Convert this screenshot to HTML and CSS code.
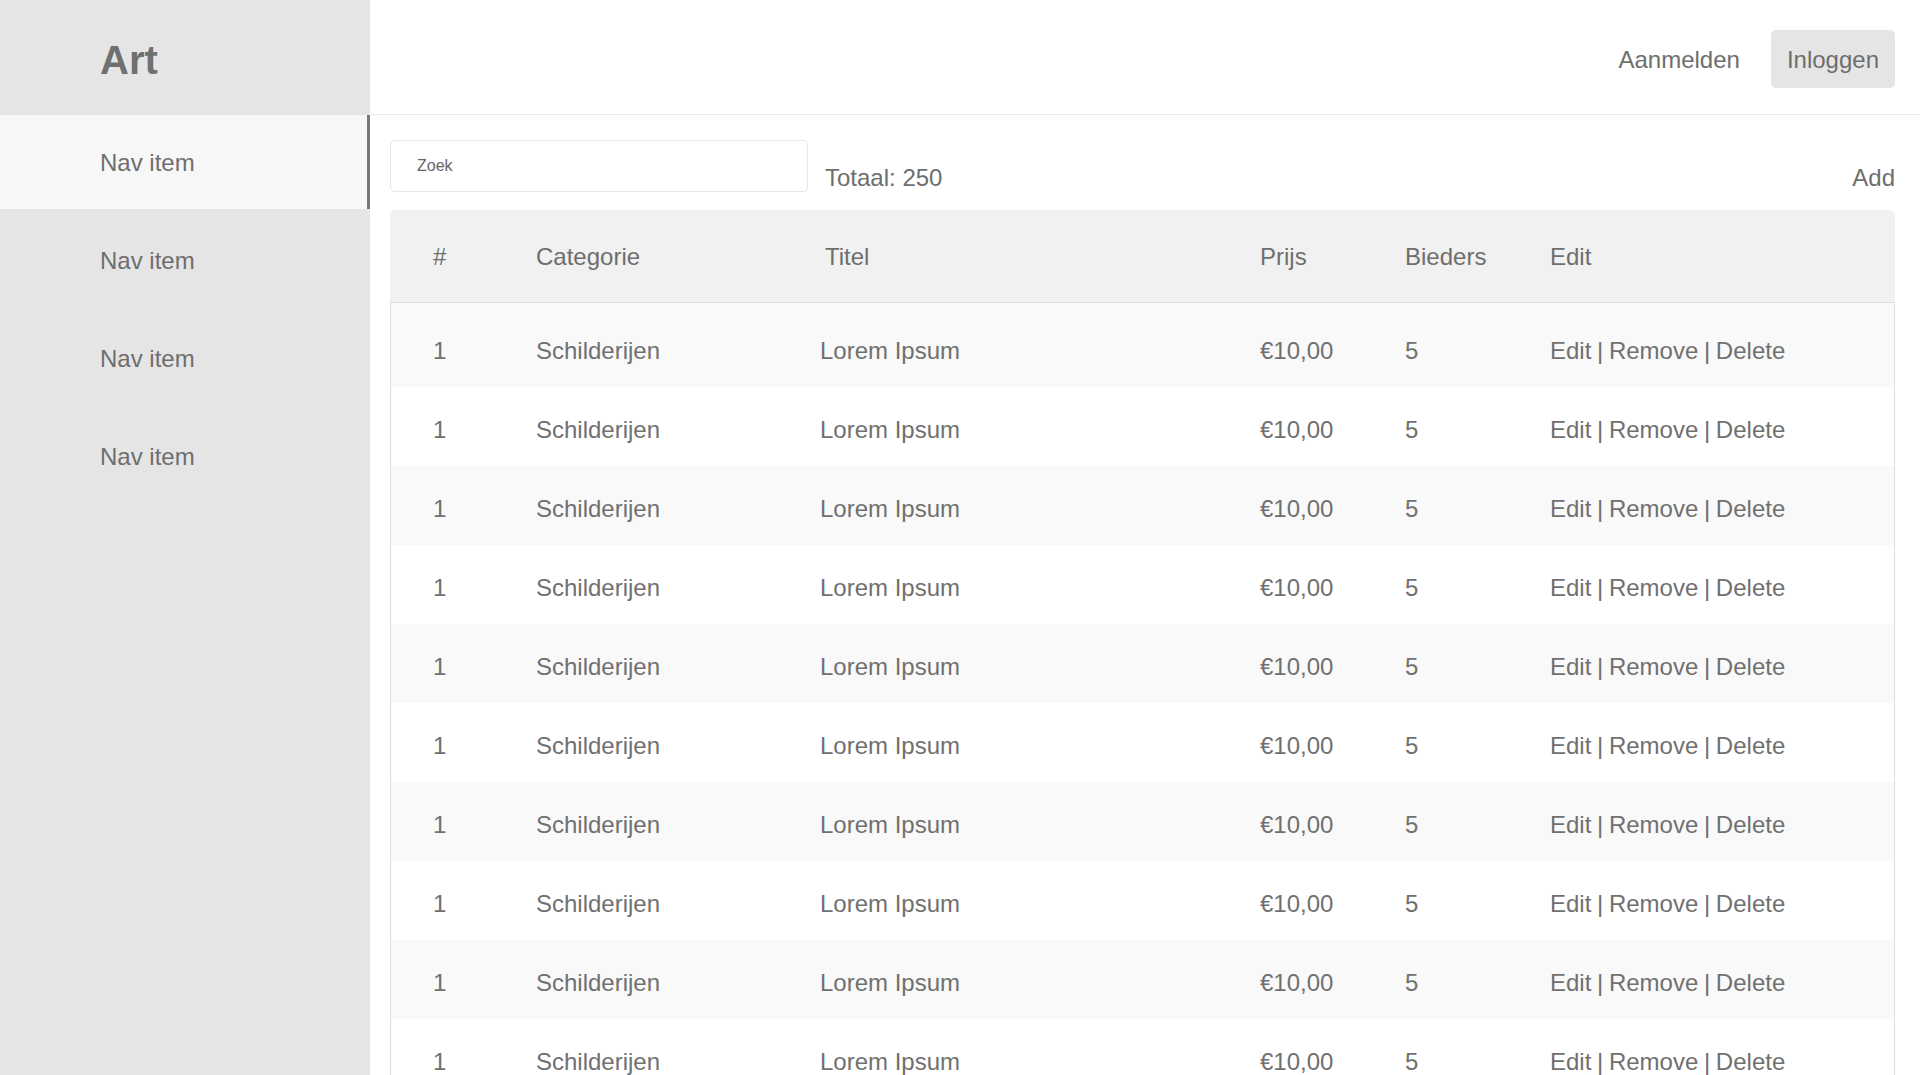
FILE: index.html
```html
<!DOCTYPE html>
<html lang="nl">
<head>
<meta charset="utf-8">
<title>Art</title>
<link rel="stylesheet" href="styles.css">
</head>
<body>
<div class="app">
  <aside class="sidebar">
    <div class="logo">Art</div>
    <nav class="nav">
      <a class="nav-item active">Nav item</a>
      <a class="nav-item">Nav item</a>
      <a class="nav-item">Nav item</a>
      <a class="nav-item">Nav item</a>
    </nav>
  </aside>
  <main class="main">
    <header class="topbar">
      <a class="topbar-link">Aanmelden</a>
      <button class="btn-login">Inloggen</button>
    </header>
    <section class="content">
      <div class="toolbar">
        <input class="search" type="text" placeholder="Zoek">
        <span class="total">Totaal: 250</span>
        <a class="add">Add</a>
      </div>
      <div class="table">
        <div class="thead grid">
          <span>#</span><span>Categorie</span><span>Titel</span><span>Prijs</span><span>Bieders</span><span>Edit</span>
        </div>
        <div class="tbody">
          <div class="tr grid"><span>1</span><span>Schilderijen</span><span class="c-title">Lorem Ipsum</span><span>€10,00</span><span>5</span><span class="c-actions">Edit | Remove | Delete</span></div>
          <div class="tr grid"><span>1</span><span>Schilderijen</span><span class="c-title">Lorem Ipsum</span><span>€10,00</span><span>5</span><span class="c-actions">Edit | Remove | Delete</span></div>
          <div class="tr grid"><span>1</span><span>Schilderijen</span><span class="c-title">Lorem Ipsum</span><span>€10,00</span><span>5</span><span class="c-actions">Edit | Remove | Delete</span></div>
          <div class="tr grid"><span>1</span><span>Schilderijen</span><span class="c-title">Lorem Ipsum</span><span>€10,00</span><span>5</span><span class="c-actions">Edit | Remove | Delete</span></div>
          <div class="tr grid"><span>1</span><span>Schilderijen</span><span class="c-title">Lorem Ipsum</span><span>€10,00</span><span>5</span><span class="c-actions">Edit | Remove | Delete</span></div>
          <div class="tr grid"><span>1</span><span>Schilderijen</span><span class="c-title">Lorem Ipsum</span><span>€10,00</span><span>5</span><span class="c-actions">Edit | Remove | Delete</span></div>
          <div class="tr grid"><span>1</span><span>Schilderijen</span><span class="c-title">Lorem Ipsum</span><span>€10,00</span><span>5</span><span class="c-actions">Edit | Remove | Delete</span></div>
          <div class="tr grid"><span>1</span><span>Schilderijen</span><span class="c-title">Lorem Ipsum</span><span>€10,00</span><span>5</span><span class="c-actions">Edit | Remove | Delete</span></div>
          <div class="tr grid"><span>1</span><span>Schilderijen</span><span class="c-title">Lorem Ipsum</span><span>€10,00</span><span>5</span><span class="c-actions">Edit | Remove | Delete</span></div>
          <div class="tr grid"><span>1</span><span>Schilderijen</span><span class="c-title">Lorem Ipsum</span><span>€10,00</span><span>5</span><span class="c-actions">Edit | Remove | Delete</span></div>
          <div class="tr grid"><span>1</span><span>Schilderijen</span><span class="c-title">Lorem Ipsum</span><span>€10,00</span><span>5</span><span class="c-actions">Edit | Remove | Delete</span></div>
        </div>
      </div>
    </section>
  </main>
</div>
</body>
</html>
```
FILE: styles.css
```css
html, body {
  margin: 0;
  height: 100%;
  overflow: hidden;
}

body {
  font-family: "Liberation Sans", Arial, Helvetica, sans-serif;
  color: #6e6e6e;
  background: #ffffff;
}

.app {
  display: flex;
  height: 100vh;
}

/* Sidebar */
.sidebar {
  width: 370px;
  flex: none;
  background: #e5e5e5;
}

.logo {
  height: 115px;
  box-sizing: border-box;
  padding: 6px 0 0 100px;
  display: flex;
  align-items: center;
  font-size: 40px;
  font-weight: bold;
  color: #707070;
}

.nav {
  display: flex;
  flex-direction: column;
  gap: 4px;
}

.nav-item {
  height: 94px;
  box-sizing: border-box;
  padding: 1px 0 0 100px;
  display: flex;
  align-items: center;
  font-size: 24px;
  color: #6e6e6e;
  cursor: pointer;
}

.nav-item.active {
  background: #f7f7f7;
  border-right: 3px solid #777777;
}

/* Main */
.main {
  flex: 1;
  min-width: 0;
  display: flex;
  flex-direction: column;
}

.topbar {
  height: 115px;
  box-sizing: border-box;
  flex: none;
  border-bottom: 1px solid #ebebeb;
  display: flex;
  align-items: center;
  justify-content: flex-end;
  gap: 31px;
  padding: 3px 25px 0 0;
}

.topbar-link {
  font-size: 24px;
  color: #6e6e6e;
  padding-top: 2px;
  cursor: pointer;
}

.btn-login {
  height: 58px;
  padding: 2px 16px 0;
  border: none;
  border-radius: 5px;
  background: #e5e5e5;
  font-family: inherit;
  font-size: 24px;
  color: #6e6e6e;
  cursor: pointer;
}

.content {
  padding: 25px 25px 0 20px;
}

.toolbar {
  display: flex;
  align-items: flex-end;
}

.search {
  width: 418px;
  height: 52px;
  box-sizing: border-box;
  border: 1px solid #e6e6e6;
  border-radius: 5px;
  padding: 0 0 0 26px;
  font-family: inherit;
  font-size: 16px;
  color: #666666;
  outline: none;
  margin-right: 17px;
}

.search::placeholder {
  color: #666666;
}

.total,
.add {
  font-size: 24px;
  line-height: 28px;
}

.add {
  margin-left: auto;
  cursor: pointer;
}

/* Table */
.table {
  margin-top: 18px;
}

.grid {
  display: grid;
  grid-template-columns: 103px 289px 435px 145px 145px 1fr;
  font-size: 24px;
  line-height: 28px;
  white-space: nowrap;
}

.thead {
  background: #f1f1f1;
  border-radius: 5px 5px 0 0;
  border-bottom: 1px solid #dddddd;
  padding: 33px 0 31px 43px;
  color: #6e6e6e;
}

.tbody {
  border-left: 1px solid #dddddd;
  border-right: 1px solid #dddddd;
}

.tr {
  padding: 29px 0 22px 42px;
  color: #707070;
}

.tr:first-child {
  padding-top: 34px;
}

.tr:nth-child(odd) {
  background: #f9f9f9;
}

.c-title {
  margin-left: -5px;
}

.c-actions {
  word-spacing: -1px;
}
```
